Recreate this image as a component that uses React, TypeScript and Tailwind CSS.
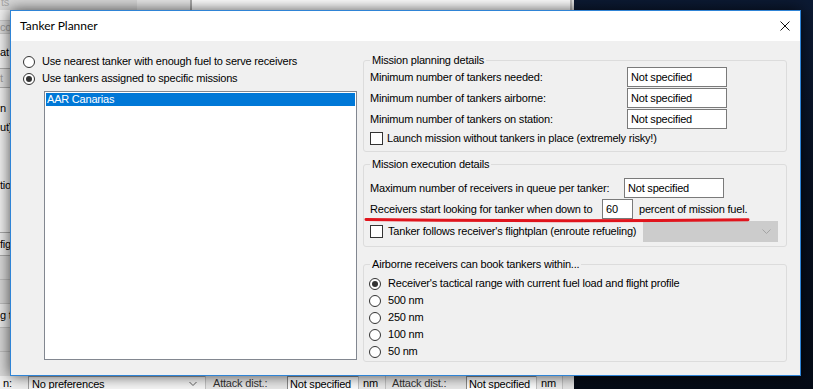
import React from "react";

const ui = "font-['Liberation_Sans',Arial,sans-serif] text-[11px] tracking-[-0.2px]";

const RadioDot = ({ checked }: { checked?: boolean }) => (
    <span className="flex h-[12px] w-[12px] shrink-0 items-center justify-center rounded-full border border-[#333333] bg-white">
        {checked && <span className="h-[6px] w-[6px] rounded-full bg-[#333333]" />}
    </span>
);

const RadioRow = ({ checked, label }: { checked?: boolean; label: string }) => (
    <div className="flex h-[17px] items-center gap-[7px] whitespace-nowrap">
        <RadioDot checked={checked} />
        <span>{label}</span>
    </div>
);

const CheckBox = () => <span className="h-[13px] w-[13px] shrink-0 border border-[#333333] bg-white" />;

const TextBox = ({ value, wide = true }: { value: string; wide?: boolean }) => (
    <div
        className={
            wide
                ? "h-[20px] w-[100px] shrink-0 overflow-hidden whitespace-nowrap border border-[#7a7a7a] bg-white pl-[3px] leading-[18px]"
                : "h-[20px] w-[31px] shrink-0 overflow-hidden whitespace-nowrap border border-[#7a7a7a] bg-white pl-[3px] leading-[18px]"
        }
    >
        {value}
    </div>
);

const BackgroundApp = () => (
    <div className={`flex h-full w-[574px] shrink-0 flex-col bg-[#f0f0f0] ${ui}`}>
        {/* strip above the dialog */}
        <div className="flex h-[10px] shrink-0 overflow-hidden">
            <div className="w-[137px] bg-[#d9d9d9] pl-[1px] leading-[12px] text-[#a8a8a8]">
                <div className="-mt-[4px]">ts</div>
            </div>
            <div className="w-[53px] bg-[#e8e8e8]" />
            <div className="w-[2px] bg-[#a9a9a9]" />
            <div className="flex-1 bg-white" />
            <div className="w-[2px] bg-[#bdbdbd]" />
            <div className="w-[2px] bg-[#e6e6e6]" />
        </div>

        {/* strip left of the dialog */}
        <div className="flex h-[366px] shrink-0">
            <div className="flex w-[10px] flex-col overflow-hidden whitespace-nowrap leading-[14px]">
                <div className="mt-[10px] h-[14px] border-y border-[#c9c9c9] bg-[#dcdcdc] leading-[12px] text-[#9d9d9d]">co</div>
                <div className="mt-[11px] h-[14px]">at</div>
                <div className="mt-[9px] h-[20px] border-y border-[#adadad] bg-[#e1e1e1] leading-[18px] text-[#9d9d9d]">t</div>
                <div className="mt-[13px] h-[14px]">n</div>
                <div className="mt-[5px] h-[14px]">ut)</div>
                <div className="mt-[44px] h-[14px]">tio</div>
                <div className="mt-[40px] h-[24px] border-y border-[#a9a9a9] bg-[#ececec] leading-[22px]">fig</div>
                <div className="h-[24px] border-b border-[#bdbdbd] bg-[#d9d9d9]" />
                <div className="h-[24px] border-b border-[#bdbdbd] bg-[#d6d6d6]" />
                <div className="h-[24px] border-b border-[#bdbdbd] bg-[#e9e9e9] leading-[22px]">g t</div>
                <div className="h-[24px] border-b border-[#bdbdbd] bg-[#d6d6d6]" />
                <div className="flex-1 bg-[#d9d9d9]" />
            </div>
            <div className="flex-1 bg-[#f0f0f0]" />
        </div>

        {/* strip below the dialog */}
        <div className="flex h-[13px] shrink-0 overflow-hidden whitespace-nowrap leading-[14px]">
            <div className="w-[28px] pl-[3px]">n:</div>
            <div className="flex w-[177px] items-start justify-between border-l border-t border-[#a0a0a0] bg-[#f7f7f7] pl-[3px] pr-[8px]">
                <span>No preferences</span>
                <svg width="8" height="6" viewBox="0 0 8 6" className="mt-[4px]">
                    <path d="M0.5 1L4 4.5L7.5 1" fill="none" stroke="#606060" strokeWidth="1" />
                </svg>
            </div>
            <div className="w-[82px] overflow-hidden border-l border-[#c4c4c4] bg-[#e9e9e9] pl-[7px] text-[#333333]">Attack dist.:</div>
            <div className="w-[71px] overflow-hidden border-l border-t border-[#8a8a8a] bg-white pl-[2px]">Not specified</div>
            <div className="w-[27px] border-l border-[#c4c4c4] bg-[#ececec] pl-[4px]">nm</div>
            <div className="w-[81px] overflow-hidden border-l border-[#c4c4c4] bg-[#e9e9e9] pl-[6px] text-[#333333]">Attack dist.:</div>
            <div className="w-[70px] overflow-hidden border-l border-t border-[#8a8a8a] bg-white pl-[2px]">Not specified</div>
            <div className="w-[27px] border-x border-[#c4c4c4] bg-[#ececec] pl-[4px]">nm</div>
            <div className="flex-1 bg-[#e4e4e4]" />
        </div>
    </div>
);

const TankerPlanner = () => (
    <div className="absolute left-[10px] top-[10px] flex h-[366px] w-[791px] flex-col border border-[#2f84d6] bg-[#f0f0f0] shadow-[0_0_14px_rgba(0,0,0,0.7)]">
        <div className="flex h-[30px] shrink-0 items-center justify-between bg-white pl-[9px] pr-[10px]">
            <span className="font-['Lato',sans-serif] text-[12px] text-black">Tanker Planner</span>
            <svg width="10" height="10" viewBox="0 0 10 10">
                <path d="M0.5 0.5L9.5 9.5M9.5 0.5L0.5 9.5" stroke="#111111" strokeWidth="1" />
            </svg>
        </div>

        <div className={`flex flex-1 text-black ${ui}`}>
            <div className="flex w-[352px] shrink-0 flex-col pl-[12px] pt-[12px]">
                <RadioRow label="Use nearest tanker with enough fuel to serve receivers" />
                <RadioRow checked label="Use tankers assigned to specific missions" />
                <div className="ml-[21px] mt-[4px] h-[269px] w-[313px] border border-[#828790] bg-white p-[1px]">
                    <div className="h-[13px] bg-[#0078d7] pl-[1px] leading-[13px] text-white">AAR Canarias</div>
                </div>
            </div>

            <div className="flex w-[424px] shrink-0 flex-col pt-[13px]">
                <fieldset className="rounded-[3px] border border-[#dcdcdc] px-[6px] pb-[5px]">
                    <legend className="px-[2px] leading-[13px]">Mission planning details</legend>
                    <div className="flex h-[21px] items-start whitespace-nowrap">
                        <span className="w-[257px] pt-[3px] leading-[14px]">Minimum number of tankers needed:</span>
                        <TextBox value="Not specified" />
                    </div>
                    <div className="flex h-[21px] items-start whitespace-nowrap">
                        <span className="w-[257px] pt-[3px] leading-[14px]">Minimum number of tankers airborne:</span>
                        <TextBox value="Not specified" />
                    </div>
                    <div className="flex h-[21px] items-start whitespace-nowrap">
                        <span className="w-[257px] pt-[3px] leading-[14px]">Minimum number of tankers on station:</span>
                        <TextBox value="Not specified" />
                    </div>
                    <div className="flex h-[16px] items-center gap-[4px] whitespace-nowrap">
                        <CheckBox />
                        <span>Launch mission without tankers in place (extremely risky!)</span>
                    </div>
                </fieldset>

                <fieldset className="mt-[6px] rounded-[3px] border border-[#dcdcdc] px-[6px] pb-[4px]">
                    <legend className="px-[2px] leading-[13px]">Mission execution details</legend>
                    <div className="mt-[7px] flex h-[21px] items-start whitespace-nowrap">
                        <span className="w-[254px] pt-[3px] leading-[14px]">Maximum number of receivers in queue per tanker:</span>
                        <TextBox value="Not specified" />
                    </div>
                    <div className="flex h-[21px] items-start whitespace-nowrap">
                        <span className="w-[232px] pt-[3px] leading-[14px]">Receivers start looking for tanker when down to</span>
                        <TextBox value="60" wide={false} />
                        <span className="ml-[6px] pt-[3px] leading-[14px]">percent of mission fuel.</span>
                    </div>
                    <div className="mt-[1px] flex h-[21px] items-center">
                        <div className="flex w-[273px] items-center gap-[5px] overflow-hidden whitespace-nowrap">
                            <CheckBox />
                            <span>Tanker follows receiver's flightplan (enroute refueling)</span>
                        </div>
                        <div className="flex h-[21px] w-[135px] items-center justify-end border border-[#cccccc] bg-[#cccccc] pr-[6px]">
                            <svg width="9" height="5" viewBox="0 0 9 5">
                                <path d="M0.5 0.5L4.5 4.5L8.5 0.5" fill="none" stroke="#a4a4a4" strokeWidth="1" />
                            </svg>
                        </div>
                    </div>
                </fieldset>

                <fieldset className="mt-[11px] rounded-[3px] border border-[#dcdcdc] pl-[5px] pr-[6px] pb-[1px]">
                    <legend className="ml-[1px] px-[2px] leading-[13px]">Airborne receivers can book tankers within...</legend>
                    <div className="mt-[4px]">
                        <RadioRow checked label="Receiver's tactical range with current fuel load and flight profile" />
                        <RadioRow label="500 nm" />
                        <RadioRow label="250 nm" />
                        <RadioRow label="100 nm" />
                        <RadioRow label="50 nm" />
                    </div>
                </fieldset>
            </div>
        </div>
    </div>
);

export default function App() {
    return (
        <div className="relative flex h-[389px] w-[813px] overflow-hidden bg-[#070f1d]">
            <BackgroundApp />
            <div className="flex-1 bg-gradient-to-b from-[#0c1a33] via-[#070f1e] to-[#050b16]" />

            <TankerPlanner />

            {/* red annotation stroke under the fuel threshold row */}
            <svg className="pointer-events-none absolute left-0 top-0" width="813" height="389" viewBox="0 0 813 389">
                <path d="M366 219.5 Q557 221.8 748 219.8" fill="none" stroke="#e0141c" strokeWidth="3" strokeLinecap="round" />
            </svg>
        </div>
    );
}
